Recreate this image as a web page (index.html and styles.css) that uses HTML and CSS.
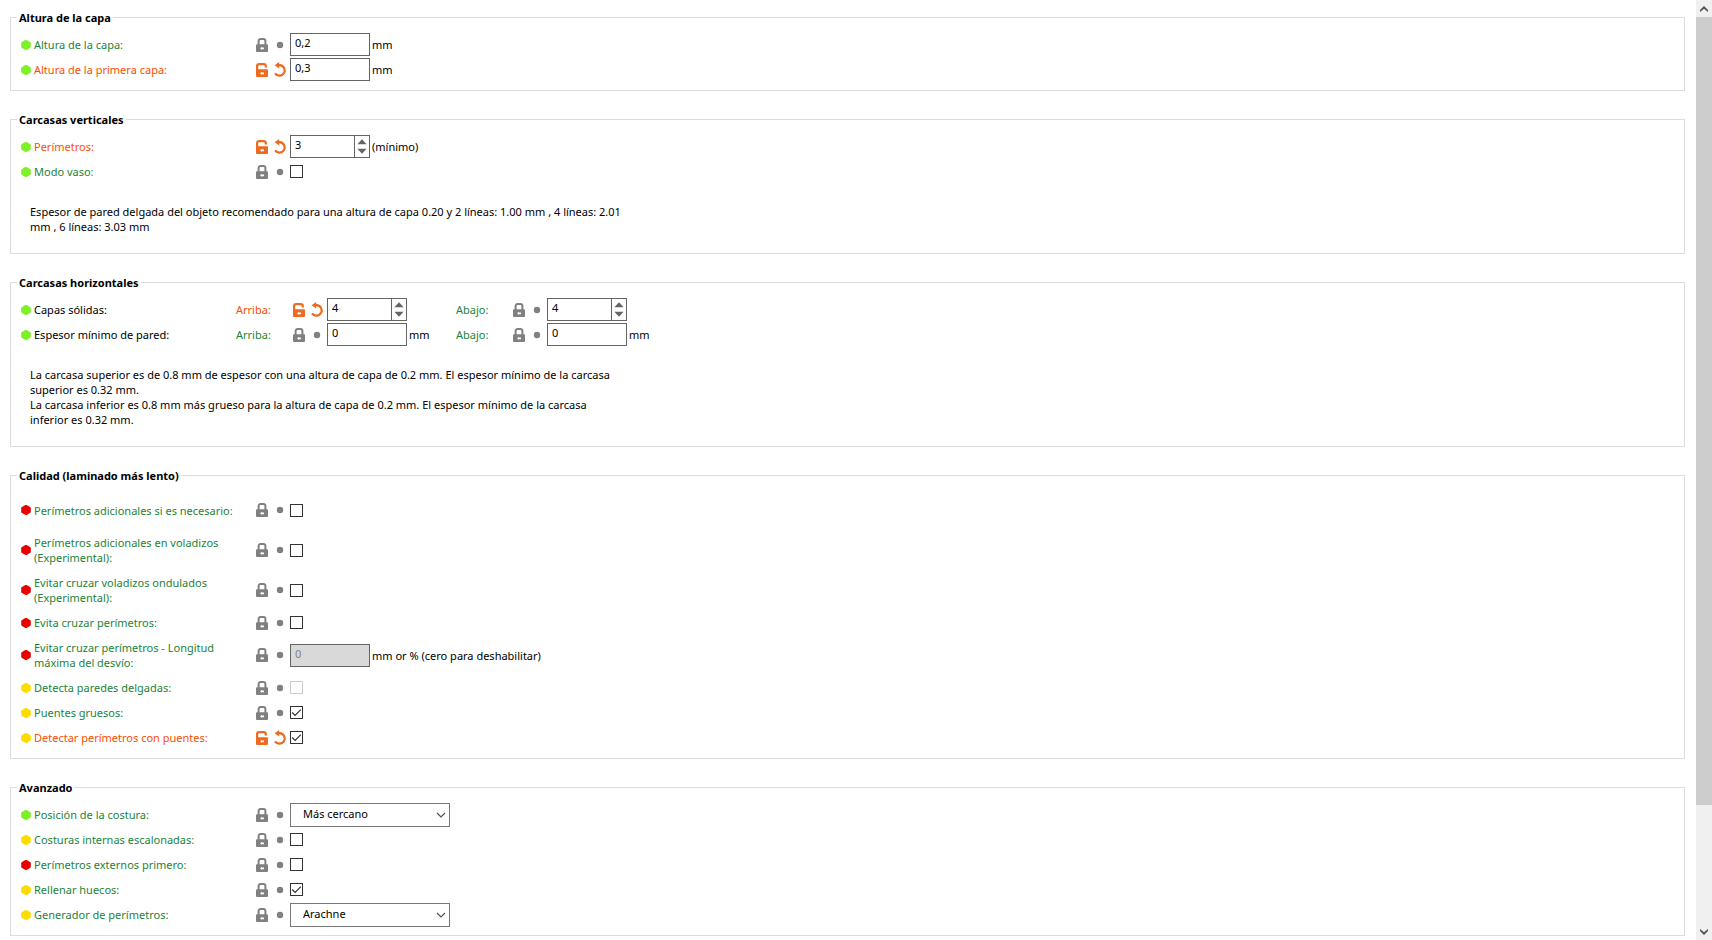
FILE: index.html
```html
<!DOCTYPE html>
<html lang="es">
<head>
  <meta charset="UTF-8" />
  <meta name="viewport" content="width=device-width, initial-scale=1" />
  <title>Capas y perímetros</title>
  <link rel="stylesheet" href="styles.css">
</head>
<body>

  <svg class="sprite" aria-hidden="true">
    <symbol id="hex" viewBox="0 0 10 10">
      <path d="M4 0.2 Q5 -0.3 6 0.2 L9 1.9 Q9.8 2.4 9.8 3.2 V6.8 Q9.8 7.6 9 8.1 L6 9.8 Q5 10.3 4 9.8 L1 8.1 Q0.2 7.6 0.2 6.8 V3.2 Q0.2 2.4 1 1.9 Z" />
    </symbol>
    <symbol id="lock" viewBox="0 0 12 14">
      <path d="M2.6 7 V3.1 Q2.6 1.1 4.6 1.1 H7.4 Q9.4 1.1 9.4 3.1 V7" fill="none" stroke="currentColor" stroke-width="2" />
      <path fill-rule="evenodd" d="M1 6.3 H11 Q12 6.3 12 7.3 V13 Q12 14 11 14 H1 Q0 14 0 13 V7.3 Q0 6.3 1 6.3 Z M4 10.3 L6 8.8 V9.5 H8 V11.2 H6 V11.9 Z" />
    </symbol>
    <symbol id="unlock" viewBox="0 0 12 14">
      <path d="M1.1 8 V3.1 Q1.1 1.1 3.1 1.1 H7.8 Q9.8 1.1 9.8 3.1 V4.6" fill="none" stroke="currentColor" stroke-width="2.2" />
      <path fill-rule="evenodd" d="M0.5 6.3 H11 Q12 6.3 12 7.3 V13 Q12 14 11 14 H1 Q0 14 0 13 V6.3 Z M4 10.3 L6 8.8 V9.5 H8 V11.2 H6 V11.9 Z" />
    </symbol>
    <symbol id="dot" viewBox="0 0 16 16">
      <circle cx="8" cy="8" r="3.2" />
    </symbol>
    <symbol id="undo" viewBox="0 0 16 16">
      <path d="M6 3.1 H7.8 A5.3 5.3 0 1 1 3 11.4" fill="none" stroke="currentColor" stroke-width="2.2" />
      <path d="M2.6 3.3 L7.2 0 V6.6 Z" />
    </symbol>
    <symbol id="up" viewBox="0 0 10 6">
      <path d="M5 0.3 L9.6 5.3 H0.4 Z" />
    </symbol>
    <symbol id="down" viewBox="0 0 10 6">
      <path d="M5 5.7 L9.6 0.7 H0.4 Z" />
    </symbol>
    <symbol id="chevron" viewBox="0 0 10 8">
      <path d="M1 2 L5 6 L9 2" fill="none" stroke="currentColor" stroke-width="1.2" />
    </symbol>
    <symbol id="scroll-arrow" viewBox="0 0 8 6">
      <path d="M0 4 L4 0 L8 4 V6 L4 2.8 L0 6 Z" />
    </symbol>
  </svg>

  <div class="page">
    <main class="options">

      <fieldset class="group">
        <legend>Altura de la capa</legend>
        <div class="row">
          <svg class="mode simple"><use href="#hex" /></svg>
          <label class="name" for="layer-height">Altura de la capa:</label>
          <button class="state" aria-label="Valor del sistema"><svg class="lock"><use href="#lock" /></svg></button>
          <button class="state" aria-label="Sin cambios"><svg class="undo"><use href="#dot" /></svg></button>
          <input class="text" type="text" id="layer-height" value="0,2">
          <span class="unit">mm</span>
        </div>
        <div class="row changed">
          <svg class="mode simple"><use href="#hex" /></svg>
          <label class="name" for="first-layer-height">Altura de la primera capa:</label>
          <button class="state" aria-label="Volver al valor del sistema"><svg class="lock"><use href="#unlock" /></svg></button>
          <button class="state" aria-label="Deshacer"><svg class="undo"><use href="#undo" /></svg></button>
          <input class="text" type="text" id="first-layer-height" value="0,3">
          <span class="unit">mm</span>
        </div>
      </fieldset>

      <fieldset class="group">
        <legend>Carcasas verticales</legend>
        <div class="row changed">
          <svg class="mode simple"><use href="#hex" /></svg>
          <label class="name" for="perimeters">Perímetros:</label>
          <button class="state" aria-label="Volver al valor del sistema"><svg class="lock"><use href="#unlock" /></svg></button>
          <button class="state" aria-label="Deshacer"><svg class="undo"><use href="#undo" /></svg></button>
          <div class="spin">
            <input type="text" inputmode="numeric" id="perimeters" value="3">
            <div class="spin-buttons">
              <button aria-label="Más"><svg><use href="#up" /></svg></button>
              <button aria-label="Menos"><svg><use href="#down" /></svg></button>
            </div>
          </div>
          <span class="unit">(mínimo)</span>
        </div>
        <div class="row">
          <svg class="mode simple"><use href="#hex" /></svg>
          <label class="name" for="spiral-vase">Modo vaso:</label>
          <button class="state" aria-label="Valor del sistema"><svg class="lock"><use href="#lock" /></svg></button>
          <button class="state" aria-label="Sin cambios"><svg class="undo"><use href="#dot" /></svg></button>
          <input class="check" type="checkbox" id="spiral-vase">
        </div>
        <p class="note">Espesor de pared delgada del objeto recomendado para una altura de capa 0.20 y 2 líneas: 1.00 mm , 4 líneas: 2.01<br>mm , 6 líneas: 3.03 mm</p>
      </fieldset>

      <fieldset class="group">
        <legend>Carcasas horizontales</legend>
        <div class="row">
          <svg class="mode simple"><use href="#hex" /></svg>
          <span class="name title">Capas sólidas:</span>
          <div class="part changed">
            <label class="side" for="top-layers">Arriba:</label>
            <button class="state" aria-label="Volver al valor del sistema"><svg class="lock"><use href="#unlock" /></svg></button>
            <button class="state" aria-label="Deshacer"><svg class="undo"><use href="#undo" /></svg></button>
            <div class="spin">
              <input type="text" inputmode="numeric" id="top-layers" value="4">
              <div class="spin-buttons">
                <button aria-label="Más"><svg><use href="#up" /></svg></button>
                <button aria-label="Menos"><svg><use href="#down" /></svg></button>
              </div>
            </div>
            <span class="unit"></span>
          </div>
          <div class="part">
            <label class="side" for="bottom-layers">Abajo:</label>
            <button class="state" aria-label="Valor del sistema"><svg class="lock"><use href="#lock" /></svg></button>
            <button class="state" aria-label="Sin cambios"><svg class="undo"><use href="#dot" /></svg></button>
            <div class="spin">
              <input type="text" inputmode="numeric" id="bottom-layers" value="4">
              <div class="spin-buttons">
                <button aria-label="Más"><svg><use href="#up" /></svg></button>
                <button aria-label="Menos"><svg><use href="#down" /></svg></button>
              </div>
            </div>
            <span class="unit"></span>
          </div>
        </div>
        <div class="row">
          <svg class="mode simple"><use href="#hex" /></svg>
          <span class="name title">Espesor mínimo de pared:</span>
          <div class="part">
            <label class="side" for="top-thickness">Arriba:</label>
            <button class="state" aria-label="Valor del sistema"><svg class="lock"><use href="#lock" /></svg></button>
            <button class="state" aria-label="Sin cambios"><svg class="undo"><use href="#dot" /></svg></button>
            <input class="text" type="text" id="top-thickness" value="0">
            <span class="unit">mm</span>
          </div>
          <div class="part">
            <label class="side" for="bottom-thickness">Abajo:</label>
            <button class="state" aria-label="Valor del sistema"><svg class="lock"><use href="#lock" /></svg></button>
            <button class="state" aria-label="Sin cambios"><svg class="undo"><use href="#dot" /></svg></button>
            <input class="text" type="text" id="bottom-thickness" value="0">
            <span class="unit">mm</span>
          </div>
        </div>
        <p class="note">La carcasa superior es de 0.8 mm de espesor con una altura de capa de 0.2 mm. El espesor mínimo de la carcasa<br>superior es 0.32 mm.<br>La carcasa inferior es 0.8 mm más grueso para la altura de capa de 0.2 mm. El espesor mínimo de la carcasa<br>inferior es 0.32 mm.</p>
      </fieldset>

      <fieldset class="group">
        <legend>Calidad (laminado más lento)</legend>
        <div class="row tall">
          <svg class="mode expert"><use href="#hex" /></svg>
          <label class="name" for="extra-perimeters">Perímetros adicionales si es necesario:</label>
          <button class="state" aria-label="Valor del sistema"><svg class="lock"><use href="#lock" /></svg></button>
          <button class="state" aria-label="Sin cambios"><svg class="undo"><use href="#dot" /></svg></button>
          <input class="check" type="checkbox" id="extra-perimeters">
        </div>
        <div class="row tall">
          <svg class="mode expert"><use href="#hex" /></svg>
          <label class="name" for="extra-overhangs">Perímetros adicionales en voladizos (Experimental):</label>
          <button class="state" aria-label="Valor del sistema"><svg class="lock"><use href="#lock" /></svg></button>
          <button class="state" aria-label="Sin cambios"><svg class="undo"><use href="#dot" /></svg></button>
          <input class="check" type="checkbox" id="extra-overhangs">
        </div>
        <div class="row tall">
          <svg class="mode expert"><use href="#hex" /></svg>
          <label class="name" for="avoid-curled">Evitar cruzar voladizos ondulados (Experimental):</label>
          <button class="state" aria-label="Valor del sistema"><svg class="lock"><use href="#lock" /></svg></button>
          <button class="state" aria-label="Sin cambios"><svg class="undo"><use href="#dot" /></svg></button>
          <input class="check" type="checkbox" id="avoid-curled">
        </div>
        <div class="row">
          <svg class="mode expert"><use href="#hex" /></svg>
          <label class="name" for="avoid-crossing">Evita cruzar perímetros:</label>
          <button class="state" aria-label="Valor del sistema"><svg class="lock"><use href="#lock" /></svg></button>
          <button class="state" aria-label="Sin cambios"><svg class="undo"><use href="#dot" /></svg></button>
          <input class="check" type="checkbox" id="avoid-crossing">
        </div>
        <div class="row tall">
          <svg class="mode expert"><use href="#hex" /></svg>
          <label class="name" for="max-detour">Evitar cruzar perímetros - Longitud máxima del desvío:</label>
          <button class="state" aria-label="Valor del sistema"><svg class="lock"><use href="#lock" /></svg></button>
          <button class="state" aria-label="Sin cambios"><svg class="undo"><use href="#dot" /></svg></button>
          <input class="text" type="text" id="max-detour" value="0" disabled>
          <span class="unit">mm or % (cero para deshabilitar)</span>
        </div>
        <div class="row">
          <svg class="mode advanced"><use href="#hex" /></svg>
          <label class="name" for="thin-walls">Detecta paredes delgadas:</label>
          <button class="state" aria-label="Valor del sistema"><svg class="lock"><use href="#lock" /></svg></button>
          <button class="state" aria-label="Sin cambios"><svg class="undo"><use href="#dot" /></svg></button>
          <input class="check" type="checkbox" id="thin-walls" disabled>
        </div>
        <div class="row">
          <svg class="mode advanced"><use href="#hex" /></svg>
          <label class="name" for="thick-bridges">Puentes gruesos:</label>
          <button class="state" aria-label="Valor del sistema"><svg class="lock"><use href="#lock" /></svg></button>
          <button class="state" aria-label="Sin cambios"><svg class="undo"><use href="#dot" /></svg></button>
          <input class="check" type="checkbox" id="thick-bridges" checked>
        </div>
        <div class="row changed">
          <svg class="mode advanced"><use href="#hex" /></svg>
          <label class="name" for="overhangs">Detectar perímetros con puentes:</label>
          <button class="state" aria-label="Volver al valor del sistema"><svg class="lock"><use href="#unlock" /></svg></button>
          <button class="state" aria-label="Deshacer"><svg class="undo"><use href="#undo" /></svg></button>
          <input class="check" type="checkbox" id="overhangs" checked>
        </div>
      </fieldset>

      <fieldset class="group">
        <legend>Avanzado</legend>
        <div class="row">
          <svg class="mode simple"><use href="#hex" /></svg>
          <label class="name" for="seam-position">Posición de la costura:</label>
          <button class="state" aria-label="Valor del sistema"><svg class="lock"><use href="#lock" /></svg></button>
          <button class="state" aria-label="Sin cambios"><svg class="undo"><use href="#dot" /></svg></button>
          <div class="choice">
            <select id="seam-position">
              <option>Más cercano</option>
            </select>
            <svg><use href="#chevron" /></svg>
          </div>
        </div>
        <div class="row">
          <svg class="mode advanced"><use href="#hex" /></svg>
          <label class="name" for="staggered-seams">Costuras internas escalonadas:</label>
          <button class="state" aria-label="Valor del sistema"><svg class="lock"><use href="#lock" /></svg></button>
          <button class="state" aria-label="Sin cambios"><svg class="undo"><use href="#dot" /></svg></button>
          <input class="check" type="checkbox" id="staggered-seams">
        </div>
        <div class="row">
          <svg class="mode expert"><use href="#hex" /></svg>
          <label class="name" for="external-first">Perímetros externos primero:</label>
          <button class="state" aria-label="Valor del sistema"><svg class="lock"><use href="#lock" /></svg></button>
          <button class="state" aria-label="Sin cambios"><svg class="undo"><use href="#dot" /></svg></button>
          <input class="check" type="checkbox" id="external-first">
        </div>
        <div class="row">
          <svg class="mode advanced"><use href="#hex" /></svg>
          <label class="name" for="gap-fill">Rellenar huecos:</label>
          <button class="state" aria-label="Valor del sistema"><svg class="lock"><use href="#lock" /></svg></button>
          <button class="state" aria-label="Sin cambios"><svg class="undo"><use href="#dot" /></svg></button>
          <input class="check" type="checkbox" id="gap-fill" checked>
        </div>
        <div class="row">
          <svg class="mode advanced"><use href="#hex" /></svg>
          <label class="name" for="generator">Generador de perímetros:</label>
          <button class="state" aria-label="Valor del sistema"><svg class="lock"><use href="#lock" /></svg></button>
          <button class="state" aria-label="Sin cambios"><svg class="undo"><use href="#dot" /></svg></button>
          <div class="choice">
            <select id="generator">
              <option>Arachne</option>
            </select>
            <svg><use href="#chevron" /></svg>
          </div>
        </div>
      </fieldset>

    </main>

    <div class="scrollbar">
      <button class="scroll-button" aria-label="Subir"><svg><use href="#scroll-arrow" /></svg></button>
      <div class="track"><div class="thumb"></div></div>
      <button class="scroll-button scroll-down" aria-label="Bajar"><svg><use href="#scroll-arrow" /></svg></button>
    </div>
  </div>

</body>
</html>
```
FILE: styles.css
```css
* { box-sizing: border-box; }
body {
  margin: 0;
  background: #fff; color: #000;
  font: 11px/15px "Noto Sans", "Open Sans", sans-serif;
}
button, input, select { font: inherit; color: inherit; margin: 0; }
button { padding: 0; border: 0; background: none; }
svg { display: block; fill: currentColor; }
.sprite { display: none; }

.page { display: flex; height: 100vh; }
.options {
  flex: 1; overflow: hidden;
  display: flex; flex-direction: column; gap: 21px;
  padding: 10px 11px 0 10px;
}

/* groups */
.group {
  flex: none; min-width: 0;
  margin: 0; padding: 7px 0 8px 10px;
  border: 1px solid #dcdcdc;
}
legend { margin-left: -4px; padding: 0 2px; font-weight: bold; }

/* option rows */
.row { display: flex; align-items: center; height: 25px; }
.row.tall { height: 40px; }
.mode { width: 10px; height: 10px; }
.simple { color: #7df028; }
.advanced { color: #ffdc00; }
.expert { color: #e70000; }
.name { width: 225px; padding: 0 10px 0 3px; color: #1a8439; }
.name.title { width: 205px; color: #000; }
.part { display: flex; align-items: center; }
.side { width: 57px; color: #1a8439; }
.changed .name, .changed .side { color: #fc4d01; }
.state { color: #808080; }
.changed .state { color: #ed6b21; }
.lock { width: 12px; height: 14px; }
.undo { width: 16px; height: 16px; margin: 0 2px 0 4px; }
.unit { padding-left: 2px; }
.part .unit { width: 49px; }
.note { margin: 20px 0 11px 9px; }

/* controls */
.text, .spin { width: 80px; height: 23px; border: 1px solid #646464; background: #fff; }
.text, .spin input { padding: 0 4px 4px; border-radius: 0; }
.text:disabled { background: #d9d9d9; color: #808080; }
.spin { display: flex; }
.spin input { flex: 1; min-width: 0; border: 0; background: none; }
.spin-buttons {
  display: flex; flex-direction: column; justify-content: space-evenly; align-items: center;
  width: 15px; border-left: 1px solid #646464; color: #646464;
}
.spin-buttons svg { width: 10px; height: 6px; }
.check {
  appearance: none;
  width: 13px; height: 13px;
  border: 1px solid #333; background: #fff;
}
.check:checked {
  background: url('data:image/svg+xml,<svg xmlns="http://www.w3.org/2000/svg" viewBox="0 0 11 11"><path d="M1.2 5.5 L4.1 8.4 L9.8 2.7" fill="none" stroke="%23333" stroke-width="1.2"/></svg>');
}
.check:disabled { border-color: #ccc; }
.choice { display: grid; align-items: center; width: 160px; }
.choice select, .choice svg { grid-area: 1 / 1; }
.choice select {
  appearance: none;
  height: 24px; padding: 0 24px 2px 12px;
  border: 1px solid #777; border-radius: 0; background: #fff;
}
.choice svg { width: 10px; height: 8px; margin-right: 4px; justify-self: end; color: #555; pointer-events: none; }

/* scrollbar */
.scrollbar { display: flex; flex-direction: column; width: 16px; background: #f0f0f0; }
.scroll-button { display: flex; align-items: center; justify-content: center; height: 17px; color: #505050; }
.scroll-button svg { width: 8px; height: 6px; }
.scroll-down svg { transform: rotate(180deg); }
.track { flex: 1; }
.thumb { height: 87%; background: #cdcdcd; }
```
